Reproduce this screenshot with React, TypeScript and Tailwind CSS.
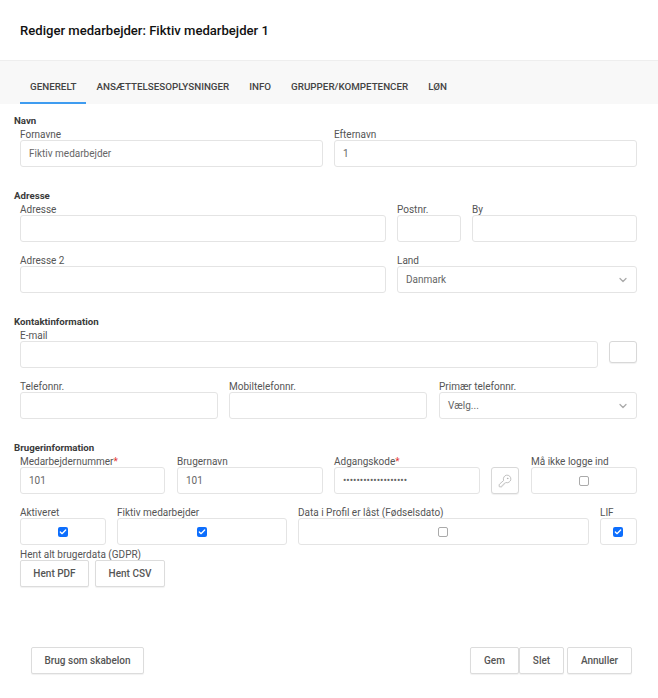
import { ChevronDown, Check, KeyRound } from "lucide-react";
import type { ReactNode } from "react";

const tabs = ["GENERELT", "ANSÆTTELSESOPLYSNINGER", "INFO", "GRUPPER/KOMPETENCER", "LØN"];

const boxClass = "flex h-[27px] items-center rounded-[3px] border border-[#e4e4e4] bg-white px-[8px] text-[10px] text-[#666]";

const Field = ({ label, required, width, children }: { label: string; required?: boolean; width: string; children: ReactNode }) => (
  <div className={`flex flex-col ${width}`}>
    <label className="h-[12px] whitespace-nowrap text-[10px] leading-[14px] text-[#555]">
      {label}
      {required && <span className="text-[#e53935]">*</span>}
    </label>
    {children}
  </div>
);

const Input = ({ value }: { value?: string }) => <div className={boxClass}>{value}</div>;

const Select = ({ value }: { value: string }) => (
  <div className={`${boxClass} justify-between pr-[7px]`}>
    <span>{value}</span>
    <ChevronDown className="size-[12px] text-[#aaa]" strokeWidth={2.5} />
  </div>
);

const CheckBox = ({ checked, className }: { checked?: boolean; className?: string }) => (
  <div className={`${boxClass} justify-center ${className ?? ""}`}>
    {checked ? (
      <span className="flex size-[10px] items-center justify-center rounded-[2px] bg-[#0d6efd]">
        <Check className="size-[8px] text-white" strokeWidth={4} />
      </span>
    ) : (
      <span className="size-[10px] rounded-[2px] border border-[#aaa] bg-white" />
    )}
  </div>
);

const Heading = ({ children }: { children: ReactNode }) => (
  <h3 className="h-[12px] text-[9.7px] leading-[14px] font-bold text-[#3a3a3a]">{children}</h3>
);

const Button = ({ children, className }: { children: ReactNode; className: string }) => (
  <button className={`flex h-[27px] items-center justify-center rounded-[2px] border border-[#dcdcdc] bg-white text-[10px] font-medium text-[#555] shadow-[0_1px_1px_rgba(0,0,0,0.06)] ${className}`}>
    {children}
  </button>
);

export default function App() {
  return (
    <div className="flex h-[698px] w-[658px] flex-col bg-white font-['Roboto',sans-serif]">
      <div className="flex h-[61px] items-center border-b border-[#eeeeee] pt-[2px] pl-[20px]">
        <h1 className="text-[13.1px] font-medium text-[#111]">Rediger medarbejder: Fiktiv medarbejder 1</h1>
      </div>

      {/* Tabs */}
      <div className="flex h-[43px] items-end bg-[#f8f8f8] pl-[20px]">
        {tabs.map((tab, i) => (
          <div
            key={tab}
            className={`flex h-[43px] items-center whitespace-nowrap border-b-2 px-[10px] pt-[12px] text-[9.8px] font-medium text-[#444] ${
              i === 0 ? "border-[#3f9cf0]" : "border-transparent"
            }`}
          >
            {tab}
          </div>
        ))}
      </div>

      <div className="flex flex-col pl-[14px]">
        {/* Navn */}
        <div className="pt-[10px]">
          <Heading>Navn</Heading>
        </div>
        <div className="flex gap-[11px] pt-[2px] pl-[6px]">
          <Field label="Fornavne" width="w-[303px]"><Input value="Fiktiv medarbejder" /></Field>
          <Field label="Efternavn" width="w-[303px]"><Input value="1" /></Field>
        </div>

        {/* Adresse */}
        <div className="pt-[22px]">
          <Heading>Adresse</Heading>
        </div>
        <div className="flex gap-[11px] pt-[2px] pl-[6px]">
          <Field label="Adresse" width="w-[366px]"><Input /></Field>
          <Field label="Postnr." width="w-[64px]"><Input /></Field>
          <Field label="By" width="w-[165px]"><Input /></Field>
        </div>
        <div className="flex gap-[11px] pt-[12px] pl-[6px]">
          <Field label="Adresse 2" width="w-[366px]"><Input /></Field>
          <Field label="Land" width="w-[240px]"><Select value="Danmark" /></Field>
        </div>

        {/* Kontaktinformation */}
        <div className="pt-[22px]">
          <Heading>Kontaktinformation</Heading>
        </div>
        <div className="flex gap-[11px] pt-[2px] pl-[6px]">
          <Field label="E-mail" width="w-[578px]"><Input /></Field>
          <div className="mt-[12px] h-[22px] w-[28px] rounded-[3px] border border-[#d8d8d8] bg-white shadow-[0_1px_1px_rgba(0,0,0,0.06)]" />
        </div>
        <div className="flex gap-[11px] pt-[12px] pl-[6px]">
          <Field label="Telefonnr." width="w-[198px]"><Input /></Field>
          <Field label="Mobiltelefonnr." width="w-[198px]"><Input /></Field>
          <div className="ml-px">
            <Field label="Primær telefonnr." width="w-[198px]"><Select value="Vælg..." /></Field>
          </div>
        </div>

        {/* Brugerinformation */}
        <div className="pt-[22px]">
          <Heading>Brugerinformation</Heading>
        </div>
        <div className="flex gap-[11px] pt-[2px] pl-[6px]">
          <Field label="Medarbejdernummer" required width="mr-px w-[145px]"><Input value="101" /></Field>
          <Field label="Brugernavn" width="w-[146px]"><Input value="101" /></Field>
          <Field label="Adgangskode" required width="w-[146px]"><Input value="•••••••••••••••••••" /></Field>
          <div className="mt-[12px] mr-px flex h-[27px] w-[28px] items-center justify-center rounded-[3px] border border-[#d8d8d8] bg-white shadow-[0_1px_1px_rgba(0,0,0,0.06)]">
            <KeyRound className="size-[14px] text-[#aaa]" strokeWidth={1.25} />
          </div>
          <Field label="Må ikke logge ind" width="w-[106px]"><CheckBox /></Field>
        </div>
        <div className="flex gap-[11px] pt-[12px] pl-[6px]">
          <Field label="Aktiveret" width="w-[86px]"><CheckBox checked /></Field>
          <Field label="Fiktiv medarbejder" width="w-[170px]"><CheckBox checked /></Field>
          <Field label="Data i Profil er låst (Fødselsdato)" width="w-[291px]"><CheckBox className="pr-[10px]" /></Field>
          <Field label="LIF" width="w-[37px]"><CheckBox checked className="pr-[9px]" /></Field>
        </div>
        <div className="flex flex-col pt-[3px] pl-[6px]">
          <span className="h-[12px] text-[10px] leading-[14px] text-[#555]">Hent alt brugerdata (GDPR)</span>
          <div className="flex gap-[6px]">
            <Button className="w-[69px]">Hent PDF</Button>
            <Button className="w-[70px]">Hent CSV</Button>
          </div>
        </div>
      </div>

      {/* Footer */}
      <div className="flex justify-between pt-[60px] pr-[26px] pl-[31px]">
        <Button className="w-[113px]">Brug som skabelon</Button>
        <div className="flex">
          <Button className="w-[49px]">Gem</Button>
          <Button className="w-[45px]">Slet</Button>
          <Button className="ml-[3px] w-[65px]">Annuller</Button>
        </div>
      </div>
    </div>
  );
}
